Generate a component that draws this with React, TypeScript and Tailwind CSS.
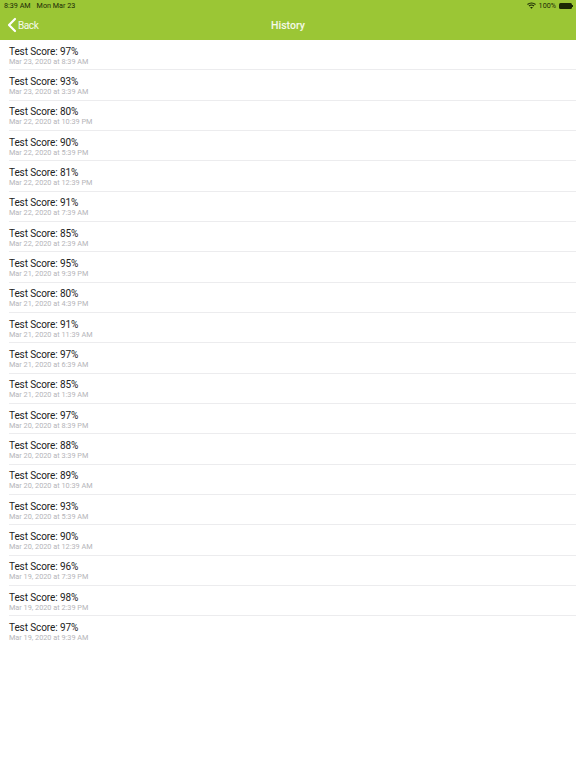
import { ChevronLeft } from 'lucide-react';

const scores = [
  ['97', 'Mar 23, 2020 at 8:39 AM'],
  ['93', 'Mar 23, 2020 at 3:39 AM'],
  ['80', 'Mar 22, 2020 at 10:39 PM'],
  ['90', 'Mar 22, 2020 at 5:39 PM'],
  ['81', 'Mar 22, 2020 at 12:39 PM'],
  ['91', 'Mar 22, 2020 at 7:39 AM'],
  ['85', 'Mar 22, 2020 at 2:39 AM'],
  ['95', 'Mar 21, 2020 at 9:39 PM'],
  ['80', 'Mar 21, 2020 at 4:39 PM'],
  ['91', 'Mar 21, 2020 at 11:39 AM'],
  ['97', 'Mar 21, 2020 at 6:39 AM'],
  ['85', 'Mar 21, 2020 at 1:39 AM'],
  ['97', 'Mar 20, 2020 at 8:39 PM'],
  ['88', 'Mar 20, 2020 at 3:39 PM'],
  ['89', 'Mar 20, 2020 at 10:39 AM'],
  ['93', 'Mar 20, 2020 at 5:39 AM'],
  ['90', 'Mar 20, 2020 at 12:39 AM'],
  ['96', 'Mar 19, 2020 at 7:39 PM'],
  ['98', 'Mar 19, 2020 at 2:39 PM'],
  ['97', 'Mar 19, 2020 at 9:39 AM'],
];

function StatusBar() {
  return (
    <div className="flex h-3 items-center justify-between pl-1 pr-[3px] text-[7.2px] text-[#1c2a05]">
      <div className="flex gap-[6px]">
        <span>8:39 AM</span>
        <span>Mon Mar 23</span>
      </div>
      <div className="flex items-center gap-[3px]">
        <svg width="9" height="7" viewBox="0 0 18 14" fill="none" stroke="#1c2a05" strokeWidth="2.2">
          <path d="M1 5 C5.5 1 12.5 1 17 5" />
          <path d="M4 8 C7 5.5 11 5.5 14 8" />
          <path d="M9 13.5 L6.4 10.8 C8 9.6 10 9.6 11.6 10.8 Z" fill="#1c2a05" stroke="none" />
        </svg>
        <span>100%</span>
        <div className="flex items-center">
          <div className="h-[6px] w-[13px] rounded-[1.5px] bg-[#1c2a05]" />
          <div className="h-[2px] w-[1px] bg-[#1c2a05]" />
        </div>
      </div>
    </div>
  );
}

export default function App() {
  return (
    <div className="h-[768px] w-[576px] overflow-hidden bg-white font-['Roboto',sans-serif]">
      <header className="h-10 bg-[#9bc635]">
        <StatusBar />
        <div className="relative flex h-7 items-center justify-center">
          <div className="absolute left-0 top-[1px] flex items-center text-white/90">
            <ChevronLeft size={24} strokeWidth={2.2} className="text-white" />
            <span className="-ml-[6px] text-[10px] tracking-[-0.4px]">Back</span>
          </div>
          <span className="text-[10.5px] font-medium text-white/90">History</span>
        </div>
      </header>
      <ul>
        {scores.map(([score, date], i) => (
          <li key={i} className="ml-[9px] h-[30.33px] border-b border-[#ececee] pt-[5.6px] last:border-b-0">
            <div className="text-[10px] leading-[12px] tracking-[-0.1px] text-[#222222]">Test Score: {score}%</div>
            <div className="text-[7.3px] leading-[8px] text-[#b4b4b8]">{date}</div>
          </li>
        ))}
      </ul>
    </div>
  );
}
